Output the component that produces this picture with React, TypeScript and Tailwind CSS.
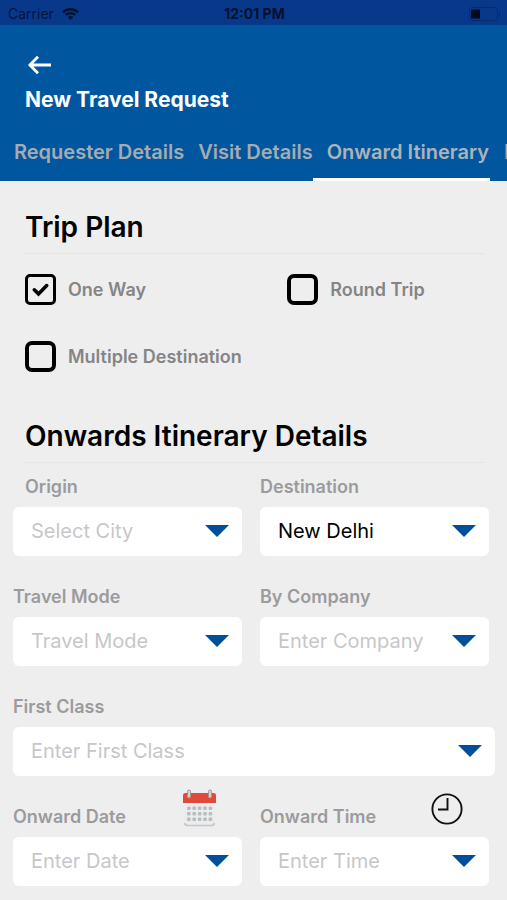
import { useState } from "react";
import type { ReactNode } from "react";

const tabs = ["Requester Details", "Visit Details", "Onward Itinerary", "Return Itinerary"];
const plans = ["One Way", "Round Trip", "Multiple Destination"];

function StatusBar() {
  return (
    <div className="grid h-[25px] grid-cols-3 items-center bg-[#08388a] pt-[2px] pl-2 pr-[6px] text-sm text-[#08143a]">
      <div className="flex items-center gap-2">
        <span>Carrier</span>
        <svg className="h-3 w-[17px]" viewBox="0 0 17 12" fill="none" aria-hidden="true">
          <path d="M1 4.4a10.6 10.6 0 0 1 15 0" stroke="#04102e" strokeWidth="2.4" />
          <path d="M3.7 7.1a6.8 6.8 0 0 1 9.6 0" stroke="#04102e" strokeWidth="2.1" />
          <path d="M8.5 12 5.8 9.2a3.8 3.8 0 0 1 5.4 0z" fill="#04102e" />
        </svg>
      </div>
      <span className="whitespace-nowrap text-center font-bold text-[#04102e]">12:01 PM</span>
      <svg className="h-[14px] w-8 justify-self-end" viewBox="0 0 32 14" fill="none" aria-hidden="true">
        <rect x="0.5" y="0.5" width="28" height="13" rx="3" stroke="#062a6b" />
        <rect x="2" y="2.5" width="9" height="9" rx="1" fill="#020a1e" />
        <path d="M30 5v4a2.4 2.4 0 0 0 0-4z" fill="#062a6b" />
      </svg>
    </div>
  );
}

function PlanOption({ label, checked, onChange }: { label: string; checked: boolean; onChange: () => void }) {
  return (
    <label className="flex items-center gap-3 text-lg leading-[31px] font-semibold text-[#858585]">
      <span className="relative flex shrink-0">
        <input
          type="checkbox"
          checked={checked}
          onChange={onChange}
          className="size-[31px] appearance-none rounded-[7px] border-4 border-black checked:rounded-[5px] checked:border-3"
        />
        {checked && (
          <svg className="pointer-events-none absolute inset-0 size-full" viewBox="0 0 31 31" fill="none" aria-hidden="true">
            <path d="m9.300 15.800 4.200 4.100 8.200-8.300" stroke="#000" strokeWidth="3.600" strokeLinecap="round" />
          </svg>
        )}
      </span>
      <span>{label}</span>
    </label>
  );
}

type FieldProps = {
  id: string;
  label: string;
  text: string;
  filled?: boolean;
  indent?: boolean;
  icon?: ReactNode;
};

function Field({ id, label, text, filled, indent, icon }: FieldProps) {
  return (
    <div className="flex flex-col gap-[10px]">
      <div className={icon ? "flex h-[38px] justify-between pr-[26px]" : indent ? "flex pl-3" : "flex"}>
        <label htmlFor={id} className="self-end text-lg leading-5 font-semibold text-[#9b9b9e]">
          {label}
        </label>
        {icon}
      </div>
      <div className="relative">
        <select
          id={id}
          className={
            filled
              ? "h-[49px] w-full appearance-none rounded-md bg-white pb-[2px] pl-[18px] pr-11 text-xl text-black"
              : "h-[49px] w-full appearance-none rounded-md bg-white pb-[2px] pl-[18px] pr-11 text-xl text-[#c7c7cb]"
          }
        >
          <option>{text}</option>
        </select>
        <svg
          className="pointer-events-none absolute top-[18px] right-[13px] h-3 w-6"
          viewBox="0 0 24 12"
          aria-hidden="true"
        >
          <path d="M0 0h24L12 12z" fill="#004f9a" />
        </svg>
      </div>
    </div>
  );
}

function CalendarIcon() {
  return (
    <svg className="h-[38px] w-[33px]" viewBox="0 0 33 38" fill="none" aria-hidden="true">
      <path d="M1 13h31v20l-3 4H4l-3-4z" fill="#ececec" />
      <path d="M1.500 34c.3 1.700 1.400 2.500 3.400 2.500h23.200c2 0 3.100-.8 3.400-2.500" stroke="#c3c7c9" strokeWidth="1.600" />
      <path d="M0 14V6.500C0 4.800 1 4 2.500 4h28C32 4 33 4.800 33 6.500V14z" fill="#e04a3a" />
      <g fill="#b5bec2">
        {[17.5, 23, 28.5].map((y) =>
          [4, 9.4, 14.8, 20.2, 25.6].map((x) => (
            <rect key={`${x}-${y}`} x={x} y={y} width="3.600" height="3.600" rx="1" />
          )),
        )}
      </g>
      <g stroke="#a9938f" strokeWidth="1">
        <rect x="4.500" y="1" width="3" height="8" rx="1.500" fill="#cfd3d4" />
        <rect x="25.500" y="1" width="3" height="8" rx="1.500" fill="#cfd3d4" />
      </g>
    </svg>
  );
}

function ClockIcon() {
  return (
    <svg className="mt-1 size-8" viewBox="0 0 32 32" fill="none" stroke="#111" aria-hidden="true">
      <circle cx="16" cy="16" r="14.600" strokeWidth="1.900" />
      <path d="M16.500 5v11.500H7" strokeWidth="1.900" />
    </svg>
  );
}

function SectionTitle({ children }: { children: ReactNode }) {
  return (
    <h2 className="mr-[22px] ml-[25px] border-b border-[#e5e5e5] pb-2 text-[28px] leading-9 font-semibold text-black">
      {children}
    </h2>
  );
}

export default function App() {
  const [tab, setTab] = useState("Onward Itinerary");
  const [plan, setPlan] = useState("One Way");

  return (
    <div className="min-h-screen overflow-hidden bg-[#eeeeee] font-['Inter','Liberation_Sans',sans-serif]">
      <header className="bg-[#0057a0]">
        <StatusBar />
        <div className="px-[25px] pt-[30px]">
          <button type="button" aria-label="Back" className="ml-[3px] block">
            <svg className="h-5 w-6" viewBox="0 0 24 20" fill="none" stroke="#fff" strokeWidth="2.800" aria-hidden="true">
              <path d="M23 10H2M10 1.800 1.800 10l8.200 8.200" strokeLinejoin="round" />
            </svg>
          </button>
          <h1 className="mt-3 text-[21px] leading-[26px] font-bold text-white">New Travel Request</h1>
        </div>
        <nav className="mt-[18px] flex overflow-hidden">
          {tabs.map((name) => (
            <button
              key={name}
              type="button"
              onClick={() => setTab(name)}
              className={
                name === tab
                  ? "h-[50px] shrink-0 border-b-3 border-white pb-[6px] pr-px pl-[14px] text-xl font-semibold whitespace-nowrap text-[#adb3b8]"
                  : "h-[50px] shrink-0 border-b-3 border-transparent pb-[6px] pl-[14px] text-xl font-semibold whitespace-nowrap text-[#a5abb0]"
              }
            >
              {name}
            </button>
          ))}
        </nav>
      </header>

      <main className="pt-7">
        <SectionTitle>Trip Plan</SectionTitle>
        <div className="mt-5 grid grid-cols-[4fr_3fr] gap-y-9 pr-[23px] pl-[25px]">
          {plans.map((name) => (
            <PlanOption key={name} label={name} checked={name === plan} onChange={() => setPlan(name)} />
          ))}
        </div>

        <div className="mt-[46px]">
          <SectionTitle>Onwards Itinerary Details</SectionTitle>
        </div>
        <form className="mt-[14px] pb-[13px]">
          <div className="grid grid-cols-2 gap-x-[18px] gap-y-[31px] pr-[18px] pl-[13px]">
            <Field id="origin" label="Origin" text="Select City" indent />
            <Field id="destination" label="Destination" text="New Delhi" filled />
            <Field id="mode" label="Travel Mode" text="Travel Mode" />
            <Field id="company" label="By Company" text="Enter Company" />
          </div>
          <div className="mt-[31px] pr-3 pl-[13px]">
            <Field id="class" label="First Class" text="Enter First Class" />
          </div>
          <div className="mt-[13px] grid grid-cols-2 gap-x-[18px] pr-[18px] pl-[13px]">
            <Field id="date" label="Onward Date" text="Enter Date" icon={<CalendarIcon />} />
            <Field id="time" label="Onward Time" text="Enter Time" icon={<ClockIcon />} />
          </div>
        </form>
      </main>
    </div>
  );
}
